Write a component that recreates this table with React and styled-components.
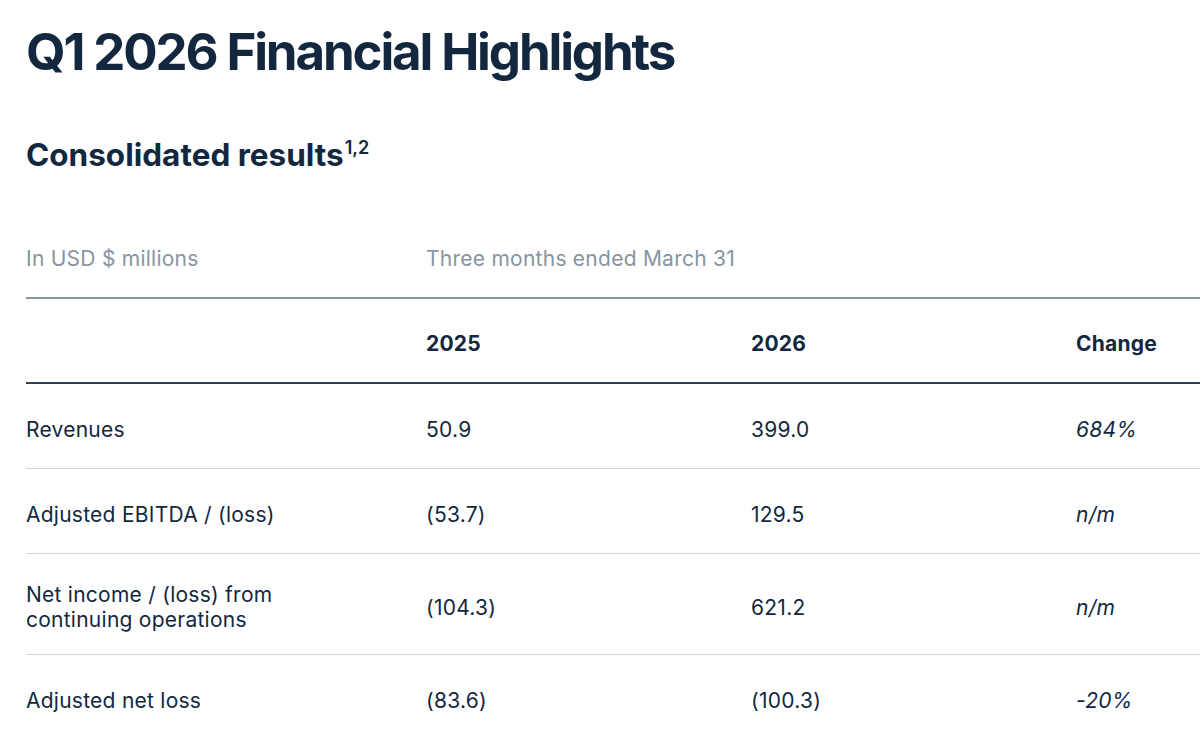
import React from "react";
import styled, { createGlobalStyle } from "styled-components";

const GlobalStyle = createGlobalStyle`
	html, body {
		margin: 0;
		padding: 0;
		background: #ffffff;
		overflow: hidden;
	}
	body {
		font-family: Inter, "Noto Sans", sans-serif;
		color: #13283f;
	}
`;

const Page = styled.main`
	padding: 22px 0 0 26px;
	width: 1300px;
`;

const Title = styled.h1`
	margin: 0;
	font-size: 51px;
	line-height: 60px;
	font-weight: 700;
	letter-spacing: -0.042em;
	color: #13283f;
`;

const Subtitle = styled.h2`
	margin: 55px 0 0;
	font-size: 31.5px;
	line-height: 36px;
	font-weight: 700;
	letter-spacing: 0;
	color: #13283f;

	sup {
		font-size: 18px;
		font-weight: 600;
		vertical-align: 12px;
		line-height: 0;
		margin-left: 1px;
	}
`;

const Table = styled.div`
	margin-top: 73px;
	width: 1260px;
`;

const Row = styled.div`
	box-sizing: border-box;
	display: grid;
	grid-template-columns: 400px 325px 325px 1fr;
	align-items: center;
	min-height: ${(p) => (p.$caption ? "auto" : "85px")};
	padding: ${(p) => (p.$caption ? "0 0 26px" : "28px 0 22px")};
	border-bottom: ${(p) => p.$line};
`;

const Cell = styled.div`
	font-size: 21px;
	line-height: 25px;
	font-weight: ${(p) => (p.$bold ? 700 : 400)};
	font-style: ${(p) => (p.$italic ? "italic" : "normal")};
	color: ${(p) => (p.$muted ? "#8894a0" : "#13283f")};
	letter-spacing: ${(p) => (p.$bold ? "0.01em" : "0.012em")};
	grid-column: ${(p) => p.$span || "auto"};
`;

const rows = [
	{ label: "Revenues", a: "50.9", b: "399.0", c: "684%" },
	{ label: "Adjusted EBITDA / (loss)", a: "(53.7)", b: "129.5", c: "n/m" },
	{
		label: (
			<>
				Net income / (loss) from
				<br />
				continuing operations
			</>
		),
		a: "(104.3)",
		b: "621.2",
		c: "n/m",
	},
	{ label: "Adjusted net loss", a: "(83.6)", b: "(100.3)", c: "-20%" },
];

export default function App() {
	return (
		<>
			<GlobalStyle />
			<Page>
				<Title>Q1 2026 Financial Highlights</Title>
				<Subtitle>
					Consolidated results<sup>1,2</sup>
				</Subtitle>
				<Table>
					<Row $caption $line="2px solid #8a959f">
						<Cell $muted>In USD $ millions</Cell>
						<Cell $muted $span="2 / 5">
							Three months ended March 31
						</Cell>
					</Row>
					<Row $line="2px solid #2e4356">
						<Cell />
						<Cell $bold>2025</Cell>
						<Cell $bold>2026</Cell>
						<Cell $bold>Change</Cell>
					</Row>
					{rows.map((row, i) => (
						<Row
							key={i}
							$line={i < rows.length - 1 ? "1px solid #cdd4db" : "none"}
						>
							<Cell>{row.label}</Cell>
							<Cell>{row.a}</Cell>
							<Cell>{row.b}</Cell>
							<Cell $italic>{row.c}</Cell>
						</Row>
					))}
				</Table>
			</Page>
		</>
	);
}
